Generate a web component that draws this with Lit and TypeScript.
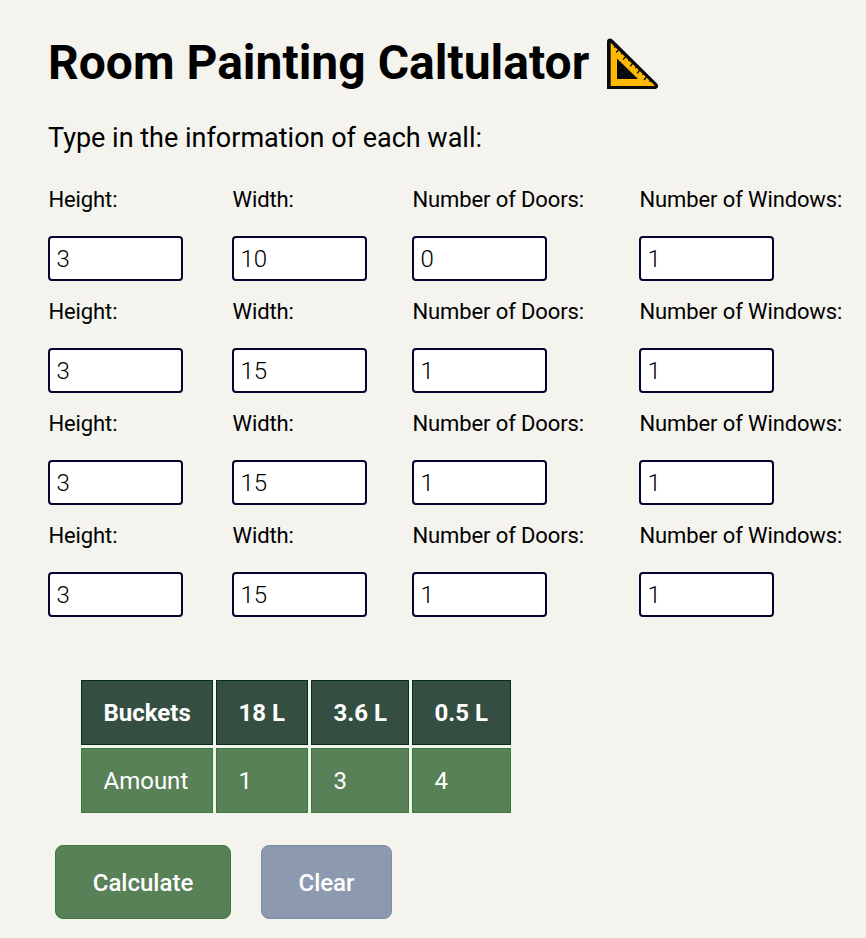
import { LitElement, html, css } from "lit";
import { customElement, state } from "lit/decorators.js";

const LABELS = ["Height:", "Width:", "Number of Doors:", "Number of Windows:"];

@customElement("app-root")
export class AppRoot extends LitElement {
  @state() private walls: number[][] = [
    [3, 10, 0, 1],
    [3, 15, 1, 1],
    [3, 15, 1, 1],
    [3, 15, 1, 1],
  ];

  static styles = css`
    :host {
      display: block;
      box-sizing: border-box;
      height: 938px;
      overflow: hidden;
      padding: 35px 0 0 48px;
      background: #f4f3ee;
      color: #000;
      font-family: Roboto, "Liberation Sans", sans-serif;
    }
    h1 {
      display: flex;
      align-items: flex-start;
      margin: 0;
      height: 56px;
      font-size: 48px;
      line-height: 56px;
      font-weight: 700;
      white-space: nowrap;
    }
    .title { width: 558px; }
    .square { display: block; width: 54px; height: 54px; margin-top: 3px; }
    .intro {
      margin: 31px 0 0;
      font-size: 27px;
      line-height: 32px;
      white-space: nowrap;
    }
    .walls { margin-top: 28px; }
    .wall {
      display: grid;
      grid-template-columns: 184px 180px 227px 220px;
      height: 112px;
    }
    .field { display: block; }
    .label {
      display: block;
      height: 54px;
      padding-left: 0.5px;
      line-height: 36px;
      font-size: 22px;
      letter-spacing: -0.12px;
      white-space: nowrap;
    }
    input {
      display: block;
      box-sizing: border-box;
      width: 135px;
      height: 45px;
      margin: 0;
      padding: 0 6.5px;
      border: 2px solid #03042f;
      border-radius: 4px;
      background: #fff;
      color: #000;
      font: 300 24px Roboto, "Liberation Sans", sans-serif;
      outline: none;
    }
    table {
      margin: 47px 0 0 30px;
      border-collapse: separate;
      border-spacing: 3px;
      table-layout: fixed;
      width: 436px;
      font-size: 24px;
      line-height: 28px;
    }
    th, td {
      box-sizing: border-box;
      height: 65px;
      padding: 0 0 0 21.5px;
      text-align: left;
      white-space: nowrap;
      color: #fff;
    }
    th { background: #344e41; border: 1px solid #04301b; font-weight: 700; }
    td { background: #588157; border: 1px solid #3a7a3a; }
    .c1 { width: 132px; }
    .c2 { width: 92px; }
    .c3 { width: 98px; }
    .c4 { width: 99px; }
    .actions { display: flex; gap: 30px; margin: 29px 0 0 7px; }
    button {
      box-sizing: border-box;
      height: 74px;
      padding: 2px 0 0;
      border-radius: 8px;
      color: #fff;
      font: 500 24px Roboto, "Liberation Sans", sans-serif;
    }
    .calculate { width: 176px; background: #588157; border: 1px solid #3a7a3a; }
    .clear { width: 131px; background: #8d99ae; border: 1px solid #7d8cab; }
  `;

  private edit(row: number, col: number, e: Event) {
    const value = Number((e.target as HTMLInputElement).value);
    this.walls = this.walls.map((w, i) => (i === row ? w.map((v, j) => (j === col ? value : v)) : w));
  }

  render() {
    return html`
      <h1>
        <span class="title">Room Painting Caltulator</span>
        <svg class="square" viewBox="0 0 54 54" aria-hidden="true">
          <path d="M1 51V3.6C1 .4 4.6-.4 6.7 1.7L51 45.4C53.2 47.6 52 51 49 51Z" fill="#060a0c" />
          <path d="M4.7 4.8L48.5 47.2Q49.2 48 48 48H4.7Z" fill="#ffb900" />
          <path d="M11 20.5V41H32Z" fill="#060a0c" />
          <path
            d="M13.8 10.5l-3.6 4M20.5 17.5l-3.4 4.1M27.5 24l-3.3 4.4M34.5 31l-3.3 4.3M41.2 38l-3.2 4M9.5 8l-1.5 1.5M17 14.5l-1.6 1.7M24 21.5l-1.6 1.6M31 28.5l-1.6 1.6M38 35l-1.6 1.6M44.8 42l-1.6 1.6"
            fill="none" stroke="#060a0c" stroke-width="1.3" />
        </svg>
      </h1>
      <p class="intro">Type in the information of each wall:</p>
      <div class="walls">
        ${this.walls.map(
          (wall, r) => html`<div class="wall">
            ${wall.map(
              (value, c) => html`<label class="field"
                ><span class="label">${LABELS[c]}</span
                ><input .value=${String(value)} @change=${(e: Event) => this.edit(r, c, e)}
              /></label>`
            )}
          </div>`
        )}
      </div>
      <table>
        <tr><th class="c1">Buckets</th><th class="c2">18 L</th><th class="c3">3.6 L</th><th class="c4">0.5 L</th></tr>
        <tr><td>Amount</td><td>1</td><td>3</td><td>4</td></tr>
      </table>
      <div class="actions">
        <button class="calculate">Calculate</button>
        <button class="clear">Clear</button>
      </div>
    `;
  }
}
